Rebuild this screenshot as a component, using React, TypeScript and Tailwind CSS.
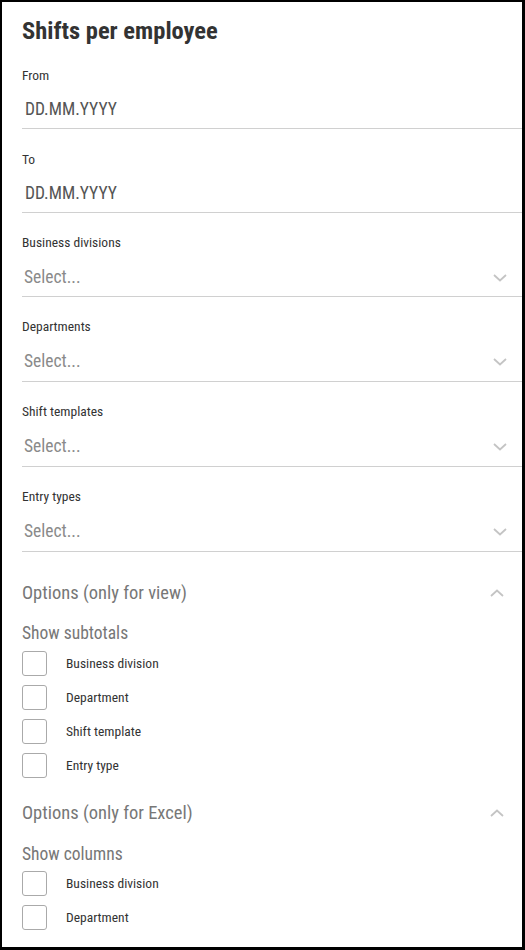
import React from "react";

const font = { fontFamily: '"Roboto Condensed", "Liberation Sans Narrow", Roboto, sans-serif' };

function Chevron({ up = false }: { up?: boolean }) {
  return (
    <svg width="16" height="10" viewBox="0 0 16 10" className="text-[#c4c4c4]">
      {up ? (
        <path d="M2 8 L8 2.5 L14 8" fill="none" stroke="currentColor" strokeWidth="1.8" />
      ) : (
        <path d="M2 2 L8 7.5 L14 2" fill="none" stroke="currentColor" strokeWidth="1.8" />
      )}
    </svg>
  );
}

function DateField({ label }: { label: string }) {
  return (
    <div className="h-[84px] flex flex-col border-b border-[#d0d0d0]">
      <div className="h-[36px] pt-[24px] text-[13.5px] leading-[13px] text-[#333]">{label}</div>
      <div className="h-[47px] pt-[17px] pl-[3px] text-[17.5px] leading-[22px] text-[#555]">DD.MM.YYYY</div>
    </div>
  );
}

function SelectField({ label, first = false }: { label: string; first?: boolean }) {
  return (
    <div className={first ? "h-[84px] flex flex-col border-b border-[#d0d0d0]" : "h-[85px] flex flex-col border-b border-[#d0d0d0]"}>
      <div className="h-[36px] pt-[23px] text-[13.5px] leading-[13px] text-[#333]">{label}</div>
      <div className="flex-1 flex items-start justify-between pt-[17px] pl-[2px] pr-[14px] text-[17.5px] leading-[22px] text-[#8a8a8a]">
        <span>Select...</span>
        <span className="pt-[7px]"><Chevron /></span>
      </div>
    </div>
  );
}

function Check({ label }: { label: string }) {
  return (
    <div className="h-[34px] flex items-center">
      <div className="w-[25px] h-[25px] border border-[#aaa] rounded-[3px] bg-white" />
      <span className="ml-[19px] text-[13.5px] text-[#333]">{label}</span>
    </div>
  );
}

export default function App() {
  return (
    <div className="w-[525px] h-[950px] bg-white border-l-2 border-t-2 border-r-[3px] border-b-[3px] border-black overflow-hidden" style={font}>
      <div className="pl-[20px]">
        <div className="h-[43px] pt-[14px]">
          <h1 className="text-[24.5px] leading-[30px] font-bold text-[#333]">Shifts per employee</h1>
        </div>
        <DateField label="From" />
        <DateField label="To" />
        <SelectField label="Business divisions" first />
        <SelectField label="Departments" />
        <SelectField label="Shift templates" />
        <SelectField label="Entry types" />
        <div className="h-[70px] pt-[29px] pr-[17px] flex items-start justify-between">
          <span className="text-[18.5px] leading-[24px] text-[#777]">Options (only for view)</span>
          <span className="pt-[7px]"><Chevron up /></span>
        </div>
        <div className="h-[24px] text-[17.5px] leading-[22px] text-[#777]">Show subtotals</div>
        <Check label="Business division" />
        <Check label="Department" />
        <Check label="Shift template" />
        <Check label="Entry type" />
        <div className="h-[61px] pt-[19px] pr-[17px] flex items-start justify-between">
          <span className="text-[18.5px] leading-[24px] text-[#777]">Options (only for Excel)</span>
          <span className="pt-[7px]"><Chevron up /></span>
        </div>
        <div className="h-[23px] text-[17.5px] leading-[22px] text-[#777]">Show columns</div>
        <Check label="Business division" />
        <Check label="Department" />
      </div>
    </div>
  );
}
